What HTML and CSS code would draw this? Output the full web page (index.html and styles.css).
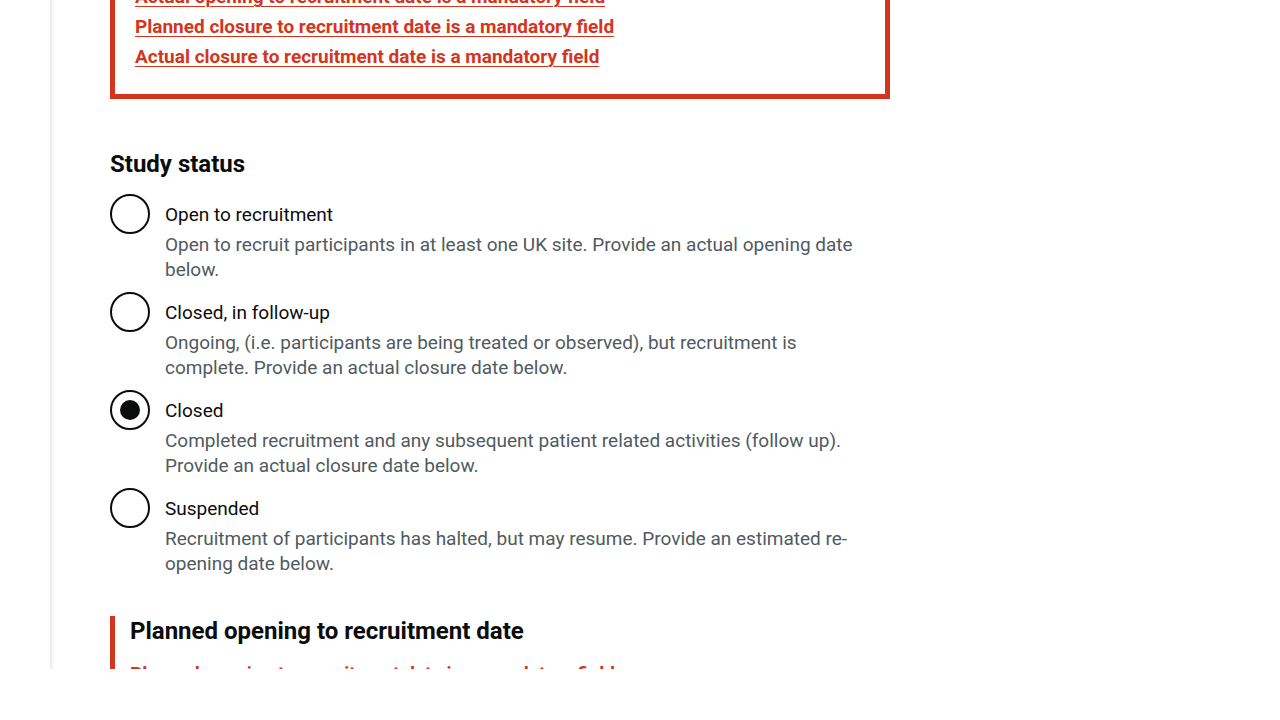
FILE: index.html
```html
<!DOCTYPE html>
<html lang="en">
<head>
<meta charset="utf-8">
<meta name="viewport" content="width=device-width, initial-scale=1">
<title>Study status</title>
<link rel="stylesheet" href="styles.css">
</head>
<body>
<main class="page">
  <div class="content">
    <nav class="error-summary" aria-label="Errors">
      <ul class="error-list">
        <li><a href="#actual-opening">Actual opening to recruitment date is a mandatory field</a></li>
        <li><a href="#planned-closure">Planned closure to recruitment date is a mandatory field</a></li>
        <li><a href="#actual-closure">Actual closure to recruitment date is a mandatory field</a></li>
      </ul>
    </nav>
    <fieldset class="radios">
      <legend class="heading">Study status</legend>
      <div class="radio-item">
        <input class="radio" type="radio" name="status" id="open" aria-describedby="open-hint">
        <div class="radio-text">
          <label class="radio-label" for="open">Open to recruitment</label>
          <div class="hint" id="open-hint">Open to recruit participants in at least one UK site. Provide an actual opening date below.</div>
        </div>
      </div>
      <div class="radio-item">
        <input class="radio" type="radio" name="status" id="follow" aria-describedby="follow-hint">
        <div class="radio-text">
          <label class="radio-label" for="follow">Closed, in follow-up</label>
          <div class="hint" id="follow-hint">Ongoing, (i.e. participants are being treated or observed), but recruitment is complete. Provide an actual closure date below.</div>
        </div>
      </div>
      <div class="radio-item">
        <input class="radio" type="radio" name="status" id="closed" aria-describedby="closed-hint" checked>
        <div class="radio-text">
          <label class="radio-label" for="closed">Closed</label>
          <div class="hint" id="closed-hint">Completed recruitment and any subsequent patient related activities (follow up). Provide an actual closure date below.</div>
        </div>
      </div>
      <div class="radio-item">
        <input class="radio" type="radio" name="status" id="suspended" aria-describedby="suspended-hint">
        <div class="radio-text">
          <label class="radio-label" for="suspended">Suspended</label>
          <div class="hint" id="suspended-hint">Recruitment of participants has halted, but may resume. Provide an estimated re-opening date below.</div>
        </div>
      </div>
    </fieldset>
    <section class="form-group-error">
      <h2 class="heading">Planned opening to recruitment date</h2>
      <p class="error-message">Planned opening to recruitment date is a mandatory field</p>
    </section>
  </div>
</main>
</body>
</html>
```
FILE: styles.css
```css
* {
  box-sizing: border-box;
}

body {
  margin: 0;
  background: #fff;
  color: #0b0c0c;
  font-family: Roboto, Arial, sans-serif;
  font-size: 19px;
  line-height: 25px;
  overflow: hidden;
}

.page {
  height: calc(100vh - 51px);
  margin-left: 50px;
  padding-left: 60px;
  background: linear-gradient(to right, #ececec, #f3f3f3 2px, #fff 5px);
  overflow: hidden;
}

.content {
  max-width: 780px;
}

.error-summary {
  margin-top: -21px;
  padding: 0 20px 20px;
  border: 5px solid #d4351c;
}

.error-list {
  margin: 0;
  padding: 0;
  list-style: none;
}

.error-list li {
  margin-bottom: 5px;
}

.error-list a {
  color: #d4351c;
  font-weight: 700;
  text-decoration-thickness: 1px;
  text-underline-offset: 3px;
}

.radios {
  min-width: 0;
  margin: 50px 0 0;
  padding: 0;
  border: 0;
}

.heading {
  margin: 0 0 15px;
  padding: 0;
  font-size: 24px;
  font-weight: 700;
  line-height: 30px;
}

.radio-item {
  display: flex;
  gap: 15px;
  margin-bottom: 10px;
}

.radio {
  appearance: none;
  display: grid;
  place-content: center;
  flex: none;
  width: 40px;
  height: 40px;
  margin: 0;
  border: 2px solid #0b0c0c;
  border-radius: 50%;
  background: #fff;
}

.radio:checked::before {
  content: "";
  width: 20px;
  height: 20px;
  border-radius: 50%;
  background: #0b0c0c;
}

.radio-text {
  flex: 1;
  padding-right: 15px;
}

.radio-label {
  display: block;
  padding: 8px 0 5px;
}

.hint {
  color: #505a5f;
}

.form-group-error {
  margin-top: 30px;
  padding-left: 15px;
  border-left: 5px solid #d4351c;
}

.error-message {
  margin: 0;
  color: #d4351c;
  font-weight: 700;
}
```
